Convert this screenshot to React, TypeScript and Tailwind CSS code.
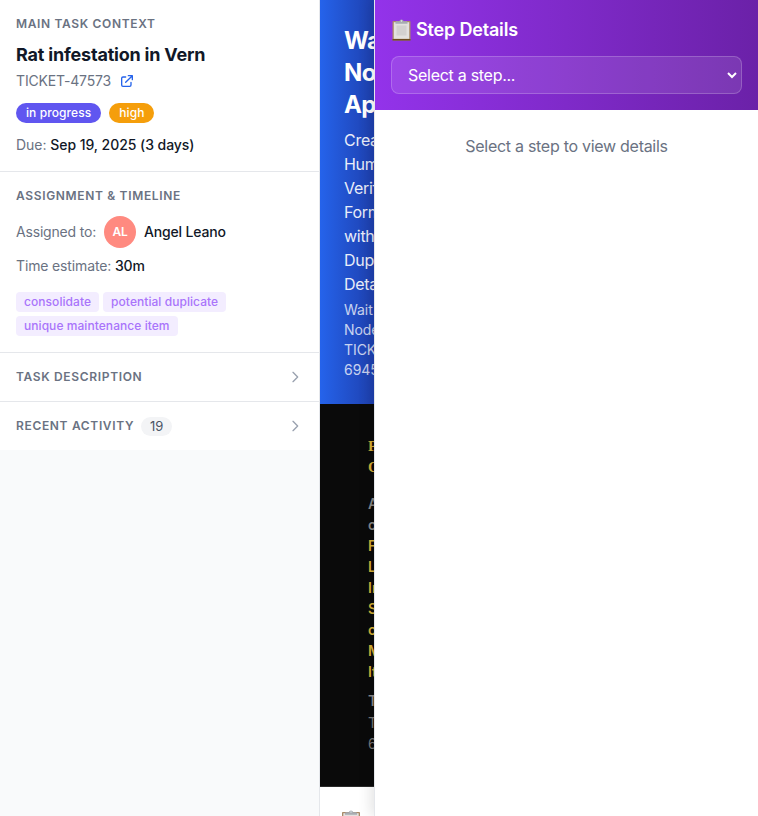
import React from "react";

const Label = ({ children }: { children: React.ReactNode }) => (
  <h3 className="text-xs font-semibold uppercase tracking-[0.66px] text-gray-500">{children}</h3>
);

const Chevron = () => (
  <svg className="h-4 w-4 text-gray-400" viewBox="0 0 24 24" fill="none" stroke="currentColor" strokeWidth="2" strokeLinecap="round" strokeLinejoin="round">
    <path d="M9 5l7 7-7 7" />
  </svg>
);

const Clipboard = ({ className }: { className?: string }) => (
  <svg className={className} viewBox="0 0 20 22">
    <rect x="1" y="2" width="18" height="19.5" rx=".8" fill="#a98a68" />
    <rect x="1" y="20" width="18" height="1.5" fill="#6d4a20" />
    <rect x="2.3" y="3.2" width="15.4" height="16.6" fill="#e3e1df" />
    <rect x="5" y="6.5" width="10" height="10" fill="#d3d1d0" />
    <path d="M4 4.8V3.2Q4 2.2 5.2 2.2H7.8Q8.3 .4 10 .4T12.2 2.2H14.8Q16 2.2 16 3.2V4.8Z" fill="#a7acb2" />
    <circle cx="10" cy="2" r=".7" fill="#e8edf2" />
  </svg>
);

const Tag = ({ children }: { children: React.ReactNode }) => (
  <span className="rounded bg-[#f3edff] px-2 py-0.5 text-xs font-medium tracking-[0.06px] text-[#a974fb]">{children}</span>
);

const Lines = ({ items }: { items: string[] }) => (
  <>
    {items.map((t, i) => (
      <div key={i}>{t}</div>
    ))}
  </>
);

export default function App() {
  return (
    <div className="flex h-[816px] w-[758px] overflow-hidden bg-white font-['Inter',sans-serif] text-[#111827]">
      <aside className="w-80 shrink-0 border-r border-gray-200 bg-gray-50">
        <section className="border-b border-gray-200 bg-white p-4">
          <Label>Main Task Context</Label>
          <h2 className="mt-2.5 text-lg leading-[25px] font-bold tracking-[-0.2px]">Rat infestation in Vern</h2>
          <div className="mt-1 flex items-center gap-2 text-sm leading-5 tracking-[-0.16px] text-gray-500">
            <span>TICKET-47573</span>
            <svg className="h-4 w-4 text-[#2563eb]" viewBox="0 0 24 24" fill="none" stroke="currentColor" strokeWidth="2" strokeLinecap="round" strokeLinejoin="round">
              <path d="M10 6H6a2 2 0 00-2 2v10a2 2 0 002 2h10a2 2 0 002-2v-4M14 4h6m0 0v6m0-6L10 14" />
            </svg>
          </div>
          <div className="mt-3 flex gap-2 text-xs font-medium tracking-[0.08px] text-white">
            <span className="rounded-full bg-[#6056f0] px-2.5 py-0.5">in progress</span>
            <span className="rounded-full bg-[#f59e0b] px-2.5 py-0.5">high</span>
          </div>
          <p className="mt-3 text-sm tracking-[-0.05px] text-gray-500">
            Due: <span className="font-medium text-[#111827]">Sep 19, 2025 (3 days)</span>
          </p>
        </section>
        <section className="border-b border-gray-200 bg-white p-4">
          <Label>Assignment &amp; Timeline</Label>
          <div className="mt-3 flex items-center gap-2 text-sm tracking-[-0.18px] text-gray-500">
            <span>Assigned to:</span>
            <span className="flex h-8 w-8 items-center justify-center rounded-full bg-[#ff8a80] text-xs font-semibold text-white">AL</span>
            <span className="font-medium text-[#111827]">Angel Leano</span>
          </div>
          <p className="mt-2 text-sm tracking-[-0.14px] text-gray-500">
            Time estimate: <span className="font-medium text-[#111827]">30m</span>
          </p>
          <div className="mt-4 flex flex-wrap gap-1">
            <Tag>consolidate</Tag>
            <Tag>potential duplicate</Tag>
            <Tag>unique maintenance item</Tag>
          </div>
        </section>
        <section className="flex h-[49px] items-center justify-between border-b border-gray-200 bg-white px-4">
          <Label>Task Description</Label>
          <Chevron />
        </section>
        <section className="flex h-12 items-center justify-between bg-white px-4">
          <div className="flex items-center gap-[7px]">
            <Label>Recent Activity</Label>
            <span className="flex h-[19px] w-[31px] items-center justify-center rounded-full bg-gray-100 text-[13px] leading-4 text-gray-600">19</span>
          </div>
          <Chevron />
        </section>
      </aside>

      <main className="flex w-[54px] shrink-0 flex-col overflow-hidden">
        <header className="bg-[linear-gradient(to_right,#2563eb,#1e40af)] py-6 pl-6 whitespace-nowrap text-white">
          <h1 className="pt-px text-2xl leading-8 font-bold tracking-[-0.6px]">
            <Lines items={["Wait", "Node", "App"]} />
          </h1>
          <div className="mt-[7px] text-base leading-6 tracking-[-0.28px] opacity-90">
            <Lines items={["Create", "Human", "Verify", "Form", "with", "Dup", "Detail"]} />
          </div>
          <div className="mt-1 text-sm leading-5 tracking-[-0.05px] opacity-75">
            <Lines items={["Wait", "Node", "TICKET", "6945"]} />
          </div>
        </header>
        <article className="h-[383px] shrink-0 border-b border-[#2a2a2a] bg-[#0a0a0a] pt-8 pl-12 text-sm leading-[21px] text-[#d4af37]">
          <div className="font-['Liberation_Serif',serif] text-[15px] font-bold">
            <Lines items={["P", "O"]} />
          </div>
          <div className="mt-[15px] font-semibold text-[#888888]">
            <Lines items={["A", "o"]} />
          </div>
          <div className="font-semibold">
            <Lines items={["F", "L", "In", "S", "o", "M", "It"]} />
          </div>
          <div className="mt-2 font-semibold text-[#888888]">T</div>
          <div className="pt-px text-[#777777]">
            <Lines items={["T", "6"]} />
          </div>
        </article>
        <div className="pt-[23px] pl-[21px]">
          <Clipboard className="h-[22px] w-5" />
        </div>
      </main>

      <aside className="relative w-96 shrink-0 border-l border-gray-200 bg-white shadow-[-4px_0_12px_rgba(0,0,0,0.1)]">
        <header className="bg-[linear-gradient(to_right,#9333ea,#6b21a8)] p-4 text-white">
          <h2 className="flex items-center text-lg leading-7 font-semibold tracking-[-0.18px]">
            <Clipboard className="mr-1 h-[22px] w-[21px]" />
            Step Details
          </h2>
          <div className="mt-3 flex h-[38px] items-center justify-between rounded-lg border border-white/20 bg-white/10 pr-[3px] pl-4 text-base tracking-[-0.28px]">
            <span>Select a step...</span>
            <svg className="h-3 w-3" viewBox="0 0 12 12" fill="none" stroke="currentColor" strokeWidth="2">
              <path d="M2 4l4 4 4-4" />
            </svg>
          </div>
        </header>
        <p className="pt-6 text-center text-base leading-6 tracking-[-0.28px] text-gray-500">Select a step to view details</p>
      </aside>
    </div>
  );
}
